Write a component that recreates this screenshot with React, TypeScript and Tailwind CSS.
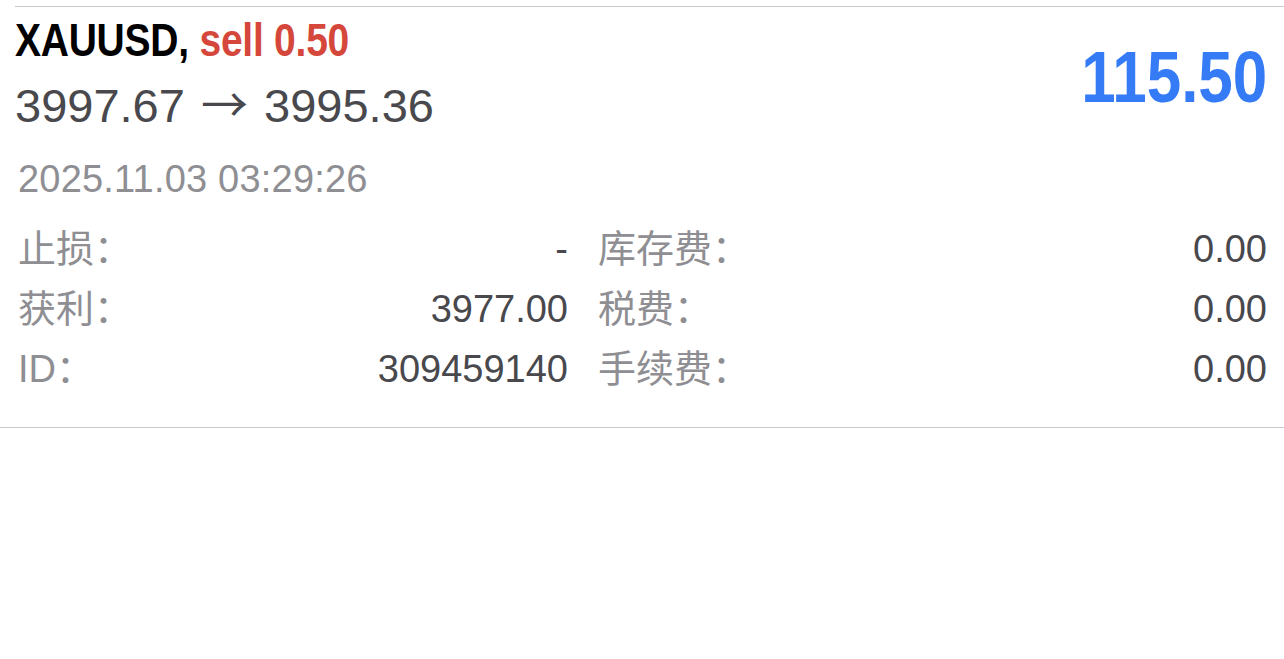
const rows = [
  { label: "止损：", value: "-", label2: "库存费：", value2: "0.00" },
  { label: "获利：", value: "3977.00", label2: "税费：", value2: "0.00" },
  { label: "ID：", value: "309459140", label2: "手续费：", value2: "0.00" },
];

const sans = "font-['Liberation_Sans','Noto_Sans_CJK_SC',sans-serif]";

export default function App() {
  return (
    <div className={`w-[1284px] h-[659px] bg-white pt-[6px] ${sans}`}>
      <div className="ml-[15px] border-t border-[#c8c7cc]" />

      <div className="flex items-start justify-between pl-[15px] pr-[17px]">
        <div className="flex flex-col">
          <div className="mt-[9px] h-[47px] text-[47px] leading-[47px] font-bold">
            <span className="inline-block origin-left scale-x-[0.83] whitespace-nowrap tracking-[-0.3px]">
              <span className="text-black">XAUUSD,</span>{" "}
              <span className="text-[#d5473a]">sell 0.50</span>
            </span>
          </div>
          <div className="mt-[19px] h-[47px] text-[47px] leading-[47px] text-[#48484d] whitespace-nowrap">
            3997.67{" "}
            <span className="mx-[3px] font-['Noto_Sans_CJK_SC',sans-serif] text-[47px] leading-[0]">→</span>{" "}
            3995.36
          </div>
        </div>
        <div className="mt-[34px] text-[72px] leading-[72px] font-bold text-[#357bf6]">
          <span className="inline-block origin-right scale-x-[0.86]">115.50</span>
        </div>
      </div>

      <div className="mt-[31px] pl-[18px] text-[38px] leading-[38px] text-[#8e8e93] tracking-[0.2px]">
        2025.11.03 03:29:26
      </div>

      <div className="mt-[32px] grid grid-cols-[550px_1fr] gap-x-[30px] gap-y-[22px] pl-[18px] pr-[17px] pb-[39px] text-[38px] leading-[38px] border-b border-[#c8c7cc]">
        {rows.map((r) => (
          <div key={r.label} className="contents">
            <div className="flex justify-between">
              <span className="text-[#8e8e93]">{r.label}</span>
              <span className="text-[#48484d]">{r.value}</span>
            </div>
            <div className="flex justify-between">
              <span className="text-[#8e8e93]">{r.label2}</span>
              <span className="text-[#48484d]">{r.value2}</span>
            </div>
          </div>
        ))}
      </div>
    </div>
  );
}
